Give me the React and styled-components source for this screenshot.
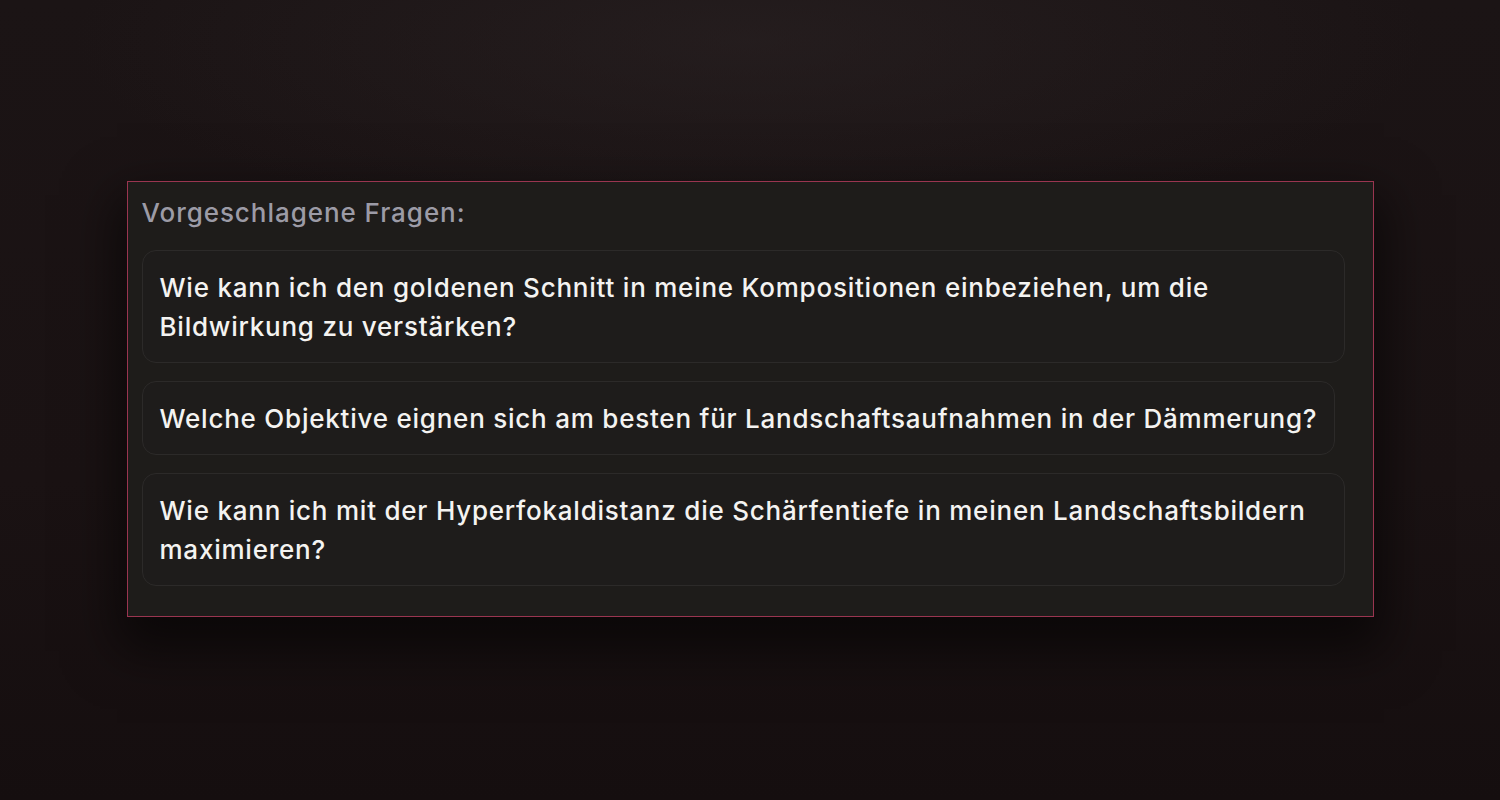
import styled, { createGlobalStyle } from 'styled-components'

const GlobalStyle = createGlobalStyle`
  html, body {
    margin: 0;
    padding: 0;
    height: 100%;
  }

  body {
    background-color: #1b1314;
    font-family: Inter, 'Noto Sans', 'Liberation Sans', sans-serif;
  }
`

const Page = styled.main`
  display: flex;
  justify-content: center;
  align-items: flex-start;
  box-sizing: border-box;
  width: 1500px;
  height: 800px;
  padding-top: 181px;
  background:
    radial-gradient(ellipse 900px 260px at 50% 40px, rgba(44, 36, 37, 0.55), transparent 75%),
    linear-gradient(180deg, #1b1415 0%, #1a1213 60%, #150e0f 100%);
`

const Panel = styled.section`
  display: flex;
  flex-direction: column;
  align-items: flex-start;
  gap: 18px;
  box-sizing: border-box;
  width: 1247px;
  padding: 11px 28px 30px 14px;
  border: 1px solid #9a3550;
  background-color: #1e1c1a;
  box-shadow: 0 24px 48px 10px rgba(0, 0, 0, 0.55);
`

const Title = styled.h3`
  margin: 0;
  font-size: 26px;
  font-weight: 500;
  line-height: 39px;
  letter-spacing: 0.95px;
  color: #9c9ba6;
`

const Suggestion = styled.button`
  box-sizing: border-box;
  max-width: 100%;
  padding: 17px 17px 16px;
  border: 1px solid #2c2a29;
  border-radius: 14px;
  background-color: #1e1c1b;
  font-family: inherit;
  font-size: 26px;
  font-weight: 500;
  line-height: 39px;
  letter-spacing: 0.77px;
  text-align: left;
  color: #f4f3f1;
  cursor: pointer;

  &:hover {
    background-color: #252321;
  }
`

const questions = [
  'Wie kann ich den goldenen Schnitt in meine Kompositionen einbeziehen, um die Bildwirkung zu verstärken?',
  'Welche Objektive eignen sich am besten für Landschaftsaufnahmen in der Dämmerung?',
  'Wie kann ich mit der Hyperfokaldistanz die Schärfentiefe in meinen Landschaftsbildern maximieren?',
]

function App() {
  return (
    <>
      <GlobalStyle />
      <Page>
        <Panel>
          <Title>Vorgeschlagene Fragen:</Title>
          {questions.map((q) => (
            <Suggestion key={q} type='button'>
              {q}
            </Suggestion>
          ))}
        </Panel>
      </Page>
    </>
  )
}

export default App
